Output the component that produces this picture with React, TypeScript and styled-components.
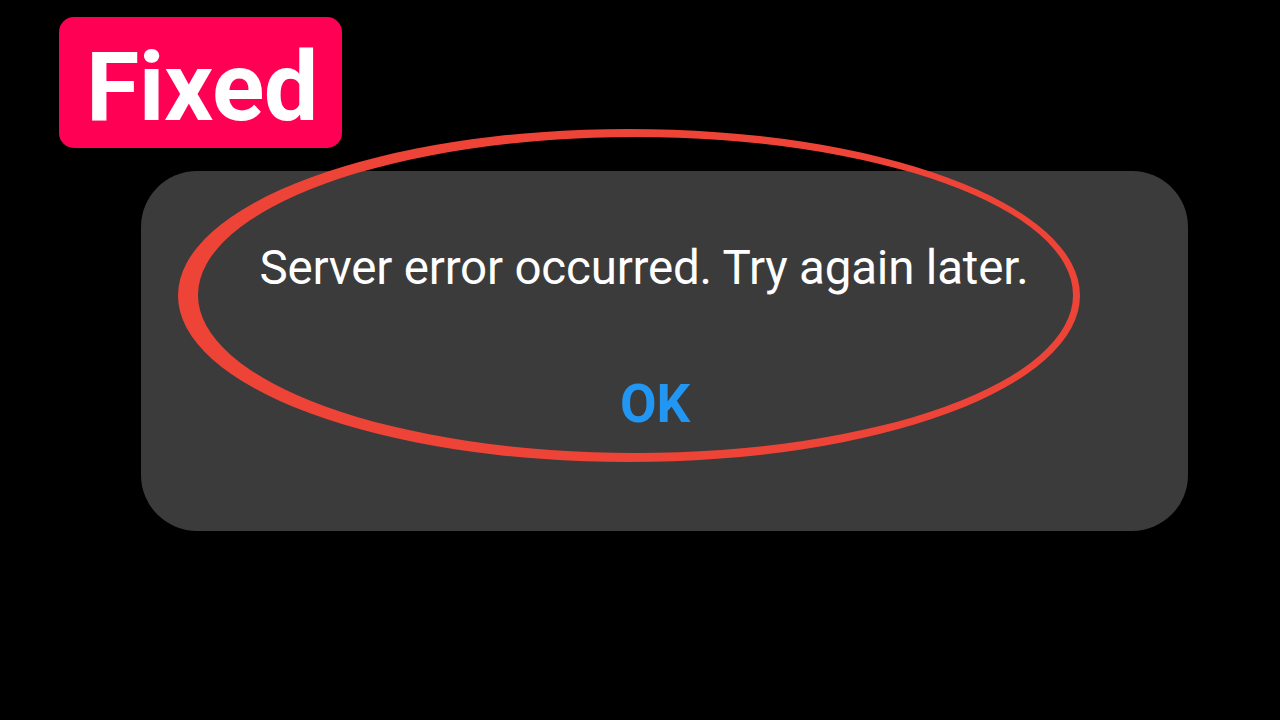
import styled, { createGlobalStyle } from "styled-components";

const GlobalStyle = createGlobalStyle`
  html, body {
    margin: 0;
    padding: 0;
    background: #000;
  }
  body {
    font-family: Roboto, "Liberation Sans", Arial, sans-serif;
  }
`;

const Page = styled.main`
  position: relative;
  width: 1280px;
  height: 720px;
  overflow: hidden;
  background: #000;
  padding: 17px 0 0 0;
  box-sizing: border-box;
`;

const Badge = styled.div`
  margin-left: 59px;
  width: 283px;
  height: 131px;
  box-sizing: border-box;
  border-radius: 15px;
  background: #ff0055;
  display: flex;
  align-items: center;
  justify-content: center;
  color: #fff;
  font-weight: 700;
  font-size: 97px;
  letter-spacing: -0.5px;
  line-height: 1;
  padding: 9px 0 0 3px;
`;

const Dialog = styled.section`
  margin: 23px 0 0 141px;
  width: 1047px;
  height: 360px;
  box-sizing: border-box;
  border-radius: 56px;
  background: #3b3b3b;
  display: flex;
  flex-direction: column;
  align-items: center;
  padding: 69px 62px 0 21px;
`;

const Message = styled.p`
  margin: 0;
  color: #fff;
  font-size: 47.5px;
  font-weight: 400;
  line-height: 56px;
  letter-spacing: -0.2px;
`;

const OkButton = styled.button`
  margin-top: 78px;
  margin-left: 22px;
  background: none;
  border: none;
  padding: 0;
  color: #2196f3;
  font-family: inherit;
  font-weight: 700;
  font-size: 53px;
  line-height: 60px;
  cursor: pointer;
`;

const Highlight = styled.svg`
  position: absolute;
  left: 0;
  top: 0;
  pointer-events: none;
`;

export default function App() {
  return (
    <>
      <GlobalStyle />
      <Page>
        <Badge>Fixed</Badge>
        <Dialog>
          <Message>Server error occurred. Try again later.</Message>
          <OkButton>OK</OkButton>
        </Dialog>
        <Highlight width="1280" height="720" viewBox="0 0 1280 720">
          <path
            fillRule="evenodd"
            fill="#ee4437"
            d="M178 295.5 A451 166.5 0 1 0 1080 295.5 A451 166.5 0 1 0 178 295.5 Z M198 295 A437.5 158 0 1 0 1073 295 A437.5 158 0 1 0 198 295 Z"
          />
        </Highlight>
      </Page>
    </>
  );
}
